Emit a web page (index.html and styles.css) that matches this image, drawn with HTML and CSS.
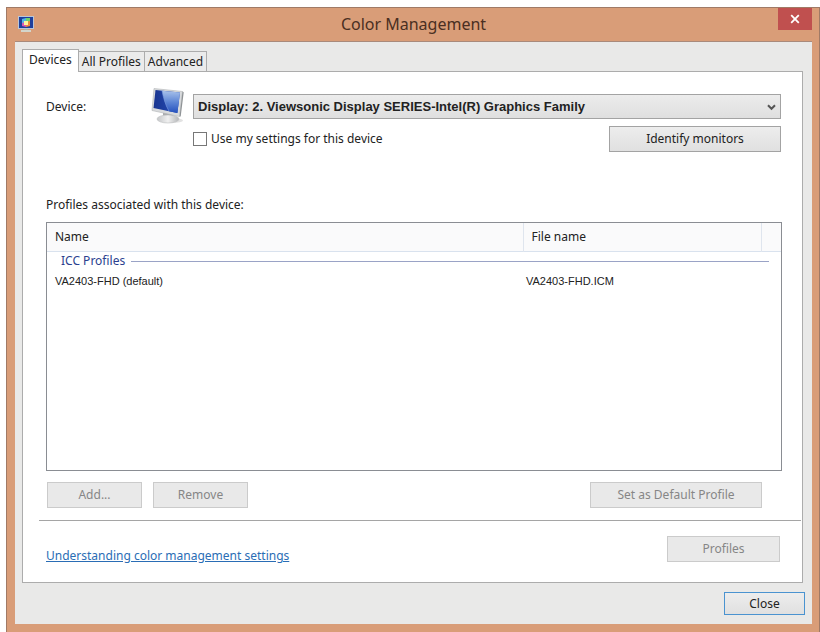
FILE: index.html
```html
<!DOCTYPE html>
<html lang="en">
<head>
  <meta charset="UTF-8">
  <title>Color Management</title>
  <link rel="stylesheet" href="styles.css">
</head>
<body>
  <div class="window">
    <header class="titlebar">
      <svg class="app-icon" width="18" height="18" viewBox="0 0 18 18">
        <rect x="1" y="1" width="16" height="13" fill="#b9c6d8" />
        <rect x="2" y="2" width="14" height="11" fill="#1f3f9c" />
        <path d="M5 4l4-1v4l-4 2z" fill="#4fb8e6" />
        <path d="M9 3h4v4l-4 1z" fill="#6fd06a" />
        <path d="M5 8l4-1v5l-4-1z" fill="#d65ab4" />
        <path d="M9 7l4-1v5l-4 1z" fill="#f08a3c" />
        <rect x="7" y="6" width="4" height="4" fill="#fff3a0" />
        <path d="M7 14h4v1.500H7z" fill="#a9b6a4" />
        <path d="M4 15h10v2H4z" fill="#d3d5cc" />
      </svg>
      <h1 class="title">Color Management</h1>
      <button class="window-close" type="button" aria-label="Close window">
        <svg width="10" height="10" viewBox="0 0 10 10">
          <path d="M1.2 1.2l7.6 7.6M8.8 1.2L1.2 8.8" stroke="#fff" stroke-width="1.8" fill="none" />
        </svg>
      </button>
    </header>

    <main class="client">
      <div class="tabs" role="tablist">
        <button class="tab active" type="button" role="tab" aria-selected="true">Devices</button>
        <button class="tab" type="button" role="tab" aria-selected="false">All Profiles</button>
        <button class="tab" type="button" role="tab" aria-selected="false">Advanced</button>
      </div>

      <div class="panel" role="tabpanel">
        <div class="panel-main">
          <!-- Device picker -->
          <div class="device">
            <label class="device-label" for="device">Device:</label>
            <svg class="device-icon" width="34" height="37" viewBox="0 0 34 37">
              <defs>
                <linearGradient id="screen" x1="0" y1="0" x2="1" y2="0">
                  <stop offset="0" stop-color="#1a3590" />
                  <stop offset="1" stop-color="#2450bd" />
                </linearGradient>
                <linearGradient id="glare" x1="0" y1="0" x2="0" y2="1">
                  <stop offset="0" stop-color="#a9c2ea" />
                  <stop offset="0.5" stop-color="#5f87d6" />
                  <stop offset="1" stop-color="#2450bd" />
                </linearGradient>
                <linearGradient id="stand" x1="0" y1="0" x2="1" y2="0">
                  <stop offset="0" stop-color="#c4c6c8" />
                  <stop offset="0.5" stop-color="#f0f0f0" />
                  <stop offset="1" stop-color="#b4b6b8" />
                </linearGradient>
              </defs>
              <ellipse cx="21" cy="32.500" rx="11" ry="2.500" fill="#e2e2e2" />
              <path d="M12 24l10 2 1 5H12z" fill="#a9abad" />
              <ellipse cx="17" cy="31" rx="11" ry="4" fill="url(#stand)" stroke="#bcbec0" stroke-width=".6" />
              <path d="M3 .5L31.500 3.500 28.500 28.500 1 22.500z" fill="#d9dbdd" stroke="#b0b3b6" stroke-width=".6" />
              <path d="M31.500 3.500l1.200.8-3 24.200h-1.200z" fill="#8f9396" />
              <path d="M4.500 2l24.500 2.600-2.600 20.400L2.500 20z" fill="url(#screen)" />
              <path d="M11 2.700l18 1.900-2.600 20.400-8.400-1.800C14 16 12.500 10 11 2.700z" fill="url(#glare)" />
              <path d="M11 2.700C12.500 10 14 16 18 23.200" fill="none" stroke="#7f9fe0" stroke-width=".6" />
            </svg>
            <div class="select-box">
              <select class="select" id="device">
                <option>Display: 2. Viewsonic Display SERIES-Intel(R) Graphics Family</option>
              </select>
              <svg class="chevron" width="9" height="7" viewBox="0 0 9 7">
                <path d="M1 1.200l3.500 3.600L8 1.200" stroke="#555" stroke-width="2" fill="none" />
              </svg>
            </div>
            <div class="device-options">
              <label class="check"><input type="checkbox">Use my settings for this device</label>
              <button class="btn btn-wide" type="button">Identify monitors</button>
            </div>
          </div>

          <!-- Profile list -->
          <h2 class="list-label" id="profiles-label">Profiles associated with this device:</h2>
          <div class="list">
            <table class="profiles" aria-labelledby="profiles-label">
              <colgroup>
                <col>
                <col class="col-file">
                <col class="col-end">
              </colgroup>
              <thead>
                <tr>
                  <th scope="col">Name</th>
                  <th scope="col">File name</th>
                  <td></td>
                </tr>
              </thead>
              <tbody>
                <tr class="group">
                  <th colspan="3" scope="rowgroup"><div class="group-title">ICC Profiles</div></th>
                </tr>
                <tr class="profile">
                  <td>VA2403-FHD (default)</td>
                  <td class="file">VA2403-FHD.ICM</td>
                  <td></td>
                </tr>
              </tbody>
            </table>
          </div>

          <div class="list-actions">
            <button class="btn" type="button" disabled>Add...</button>
            <button class="btn" type="button" disabled>Remove</button>
            <button class="btn btn-wide push" type="button" disabled>Set as Default Profile</button>
          </div>
        </div>

        <div class="panel-footer">
          <a class="help-link" href="#">Understanding color management settings</a>
          <button class="btn btn-profiles" type="button" disabled>Profiles</button>
        </div>
      </div>

      <div class="dialog-actions">
        <button class="btn btn-close" type="button">Close</button>
      </div>
    </main>
  </div>
</body>
</html>
```

FILE: styles.css
```css
* {
  box-sizing: border-box;
}
body {
  margin: 0;
  padding: 7px 0 0 6px;
  min-height: 100vh;
  display: flex;
  background: #fff;
  color: #222;
  font-family: "Noto Sans", "Open Sans", sans-serif;
  font-size: 12px;
  line-height: 16px;
}
button,
input,
select {
  font: inherit;
  color: inherit;
  margin: 0;
}
svg {
  display: block;
}

/* Window frame */
.window {
  flex: 1;
  display: flex;
  flex-direction: column;
  padding: 0 7px 8px 8px;
  background: #d99d78;
  border: 1px solid #a07a66;
  border-bottom: 0;
}
.titlebar {
  display: grid;
  grid-template-columns: 34px 1fr 34px;
  height: 33px;
}
.app-icon {
  margin: 7px 0 0 2px;
}
.title {
  margin: 0;
  font-size: 16px;
  font-weight: normal;
  line-height: 33px;
  text-align: center;
  color: #4a2f22;
}
.window-close {
  display: flex;
  align-items: center;
  justify-content: center;
  height: 22px;
  padding: 0;
  border: 0;
  background: #c0504f;
}
.client {
  flex: 1;
  display: flex;
  flex-direction: column;
  padding: 7px 9px 9px 7px;
  background: #e9e9e8;
  border-top: 1px solid #a98a7b;
}

/* Tabs */
.tabs {
  display: flex;
  align-items: flex-end;
}
.tab {
  height: 20px;
  padding: 0 3px;
  background: #ebebeb;
  border: 1px solid #acacac;
  border-bottom: 0;
  margin-left: -1px;
}
.tab.active {
  height: 23px;
  padding: 0 6px 3px;
  margin: 0 0 -1px;
  background: #fff;
  z-index: 1;
}
.panel {
  flex: 1;
  display: flex;
  flex-direction: column;
  background: #fff;
  border: 1px solid #acacac;
}
.panel-main {
  flex: 1;
  display: flex;
  flex-direction: column;
  padding: 16px 21px 12px 23px;
}

/* Device picker */
.device {
  display: grid;
  grid-template-columns: 105px 34px 1fr;
  column-gap: 4px;
  align-items: center;
}
.device-icon {
  margin-left: -4px;
}
.select-box {
  position: relative;
}
.select {
  appearance: none;
  width: 100%;
  height: 25px;
  padding: 0 24px 0 4px;
  background: linear-gradient(#ececec, #dfdfdf);
  border: 1px solid #a3a3a3;
  border-radius: 0;
  font-family: "Liberation Sans", sans-serif;
  font-size: 13px;
  font-weight: bold;
}
.chevron {
  position: absolute;
  right: 5px;
  top: 10px;
  pointer-events: none;
}
.device-options {
  grid-column: 3;
  display: flex;
  justify-content: space-between;
  align-items: center;
  margin-top: 1px;
}
.check {
  display: flex;
  align-items: center;
  gap: 4px;
}
.check input {
  appearance: none;
  width: 14px;
  height: 14px;
  background: #fff;
  border: 1px solid #777;
}

/* Buttons */
.btn {
  width: 95px;
  height: 26px;
  padding: 0;
  background: linear-gradient(#ededed, #e0e0e0);
  border: 1px solid #a3a3a3;
}
.btn:disabled {
  background: #e9e9e9;
  border-color: #cbcbcb;
  color: #868686;
}
.btn-wide {
  width: 172px;
}

/* Profile list */
.list-label {
  margin: 45px 0 9px;
  font-size: 12px;
  font-weight: normal;
}
.list {
  flex: 1;
  margin-right: -1px;
  border: 1px solid #8a8d93;
}
.profiles {
  width: 100%;
  table-layout: fixed;
  border-collapse: collapse;
}
.col-file {
  width: 238px;
}
.col-end {
  width: 20px;
}
.profiles th,
.profiles td {
  padding: 0 8px;
  font-weight: normal;
  text-align: left;
}
.profiles thead tr {
  height: 28px;
  background: #fafafb;
  border-bottom: 1px solid #d9e2ee;
}
.profiles thead th {
  border-right: 1px solid #dfe5ee;
}
.profiles .group th {
  height: 20px;
  padding: 0 12px 0 14px;
}
.group-title {
  display: flex;
  align-items: center;
  gap: 6px;
  color: #2c3f8f;
}
.group-title::after {
  content: "";
  flex: 1;
  height: 1px;
  background: #9aa3c6;
}
.profiles .profile td {
  height: 20px;
  font-family: "Liberation Sans", sans-serif;
  font-size: 11px;
}
.profiles .profile .file {
  padding-left: 3px;
}
.list-actions {
  display: flex;
  gap: 11px;
  margin-top: 11px;
  padding: 0 19px 0 1px;
}
.push {
  margin-left: auto;
}

/* Panel footer */
.panel-footer {
  display: flex;
  justify-content: space-between;
  align-items: center;
  margin: 0 1px 0 16px;
  padding: 13px 21px 18px 7px;
  border-top: 1px solid #a5a5a5;
}
.help-link {
  margin-top: 14px;
  color: #2a6db5;
}
.btn-profiles {
  width: 113px;
}
.dialog-actions {
  display: flex;
  justify-content: flex-end;
  margin: 9px -2px 0 0;
}
.btn-close {
  width: 81px;
  height: 23px;
  border-color: #4a93d0;
}
```
